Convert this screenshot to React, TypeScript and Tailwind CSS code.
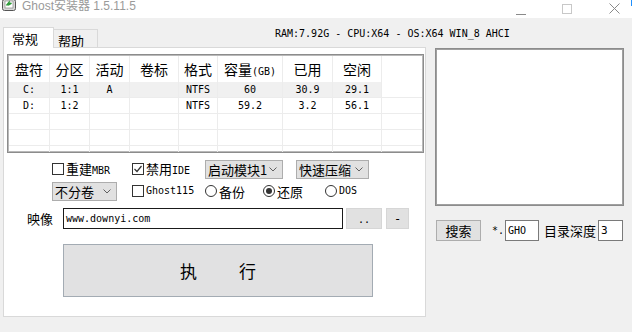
import React from "react";

const cjk = "font-['Noto_Sans_CJK_SC',sans-serif]";
const mono = "font-['DejaVu_Sans_Mono','Noto_Sans_CJK_SC',monospace]";

const columns = [
  { key: "drive", label: "盘符", w: "w-[41px]" },
  { key: "part", label: "分区", w: "w-[40px]" },
  { key: "active", label: "活动", w: "w-[40px]" },
  { key: "vol", label: "卷标", w: "w-[49px]" },
  { key: "fmt", label: "格式", w: "w-[39px]" },
  { key: "size", label: "容量", w: "w-[65px]", unit: "(GB)" },
  { key: "used", label: "已用", w: "w-[50px]" },
  { key: "free", label: "空闲", w: "w-[49px]" },
];

const rows = [
  ["C:", "1:1", "A", "", "NTFS", "60", "30.9", "29.1"],
  ["D:", "1:2", "", "", "NTFS", "59.2", "3.2", "56.1"],
  ["", "", "", "", "", "", "", ""],
  ["", "", "", "", "", "", "", ""],
  ["", "", "", "", "", "", "", ""],
];

const Chevron = () => (
  <svg width="8" height="5" viewBox="0 0 8 5" className="shrink-0">
    <polyline points="0.5,0.5 4,4 7.5,0.5" fill="none" stroke="#606060" strokeWidth="1" />
  </svg>
);

const CheckBox = ({ checked, children }: { checked?: boolean; children: React.ReactNode }) => (
  <div className="flex items-center gap-[2px]">
    <div className="w-[12px] h-[12px] border border-[#333333] bg-white flex items-center justify-center">
      {checked && (
        <svg width="10" height="10" viewBox="0 0 10 10">
          <polyline points="1.5,5 4,7.5 8.5,2" fill="none" stroke="#333333" strokeWidth="1.2" />
        </svg>
      )}
    </div>
    <span className="flex items-baseline">{children}</span>
  </div>
);

const Radio = ({ checked, children }: { checked?: boolean; children: React.ReactNode }) => (
  <div className="flex items-center gap-[2px]">
    <div className="w-[12px] h-[12px] rounded-full border border-[#333333] bg-white flex items-center justify-center">
      {checked && <div className="w-[6px] h-[6px] rounded-full bg-[#333333]" />}
    </div>
    <span className="flex items-baseline">{children}</span>
  </div>
);

const Select = ({ label, w }: { label: React.ReactNode; w: string }) => (
  <div className={`${w} h-[19px] bg-[#e1e1e1] border border-[#adadad] flex items-center justify-between pl-[2px] pr-[5px]`}>
    <span className={`${cjk} text-[13px] leading-none text-black`}>{label}</span>
    <Chevron />
  </div>
);

const App: React.FC = () => {
  return (
    <div className={`w-[632px] h-[332px] bg-[#f0f0f0] overflow-hidden text-black ${cjk}`}>
      {/* title bar */}
      <div className="h-[18px] bg-white flex items-start relative">
        <svg width="15" height="13" viewBox="0 0 15 13" className="ml-[2px] mt-[-1px]">
          <rect x="0.5" y="0.5" width="13" height="11" rx="2" fill="#d8d8d8" stroke="#555555" />
          <rect x="3" y="2" width="8" height="7" fill="#ffffff" stroke="#777777" strokeWidth="0.6" />
          <path d="M4.5 6.5 L7 3.5 L7 5.5 L9.5 4" fill="none" stroke="#2e9b3a" strokeWidth="1.6" />
        </svg>
        <span className="ml-[5px] mt-0 text-[12px] leading-[13px] text-[#9a9a9a] font-['Liberation_Sans','Noto_Sans_CJK_SC',sans-serif]">
          Ghost安装器 1.5.11.5
        </span>
        <div className="ml-auto flex items-start">
          <div className="w-[10px] h-px bg-[#8a8a8a] mt-[14px] mr-[36px]" />
          <div className="w-[10px] h-[10px] border border-[#c8c8c8] mt-[4px] mr-[37px]" />
          <svg width="11" height="11" viewBox="0 0 11 11" className="mt-[3px] mr-[12px]">
            <path d="M0.5 0.5 L10.5 10.5 M10.5 0.5 L0.5 10.5" stroke="#8a8a8a" strokeWidth="1" />
          </svg>
        </div>
        <div className="absolute right-0 top-0 w-px h-[6px] bg-[#1e90ff]" />
      </div>

      {/* tab strip */}
      <div className="h-[29px] flex items-end pl-[3px]">
        <div className="w-[51px] h-[21px] bg-white border border-b-0 border-[#d9d9d9] flex items-center pl-[8px] text-[13px] leading-none relative z-10 mb-[-1px]">
          常规
        </div>
        <div className="w-[44px] h-[18px] bg-[#f0f0f0] border border-b-0 border-l-0 border-[#d9d9d9] flex items-center pl-[4px] pt-[3px] text-[13px] leading-none">
          帮助
        </div>
        <div className={`self-start mt-[10px] ml-[177px] ${mono} text-[10px] leading-[12px] whitespace-nowrap`}>
          RAM:7.92G - CPU:X64 - OS:X64 WIN_8 AHCI
        </div>
      </div>

      <div className="flex pl-[3px]">
        {/* tab panel */}
        <div className="w-[423px] h-[270px] bg-white border border-[#d9d9d9] flex flex-col">
          {/* partition list */}
          <div className="ml-[3px] mt-[6px] w-[417px] h-[99px] border border-[#8c8c8c] shadow-[inset_1px_1px_0_#b9b9b9,inset_-1px_-1px_0_#b9b9b9] p-[1px] overflow-hidden">
            <div className="flex h-[26px]">
              {columns.map((c) => (
                <div key={c.key} className={`${c.w} h-full border-r border-[#ececec] flex items-baseline justify-center pt-[6px] text-[14px] leading-[14px]`}>
                  {c.label}
                  {c.unit && <span className={`${mono} text-[10px]`}>{c.unit}</span>}
                </div>
              ))}
              <div className="flex-1" />
            </div>
            {rows.map((r, i) => (
              <div key={i} className="flex h-[16px]">
                {columns.map((c, j) => (
                  <div
                    key={c.key}
                    className={`${c.w} h-full border-r border-b border-[#ececec] flex items-center justify-center ${mono} text-[10px] leading-none ${i === 0 ? "bg-[#f0f0f0]" : ""}`}
                  >
                    {r[j]}
                  </div>
                ))}
                <div className="flex-1 border-b border-[#ececec]" />
              </div>
            ))}
          </div>

          {/* option row 1 */}
          <div className="flex items-center mt-[6px] h-[20px] pl-[48px]">
            <div className="w-[80px]">
              <CheckBox>
                <span className="text-[13px] leading-none">重建</span>
                <span className={`${mono} text-[10px] leading-none`}>MBR</span>
              </CheckBox>
            </div>
            <div className="w-[73px]">
              <CheckBox checked>
                <span className="text-[13px] leading-none">禁用</span>
                <span className={`${mono} text-[10px] leading-none`}>IDE</span>
              </CheckBox>
            </div>
            <Select w="w-[78px]" label={<>启动模块1</>} />
            <div className="w-[13px]" />
            <Select w="w-[73px]" label={<>快速压缩</>} />
          </div>

          {/* option row 2 */}
          <div className="flex items-center mt-[2px] h-[20px] pl-[48px]">
            <Select w="w-[65px]" label={<>不分卷</>} />
            <div className="w-[15px]" />
            <div className="w-[73px]">
              <CheckBox>
                <span className={`${mono} text-[10px] leading-none`}>Ghost115</span>
              </CheckBox>
            </div>
            <div className="w-[58px]">
              <Radio>
                <span className="text-[13px] leading-none">备份</span>
              </Radio>
            </div>
            <div className="w-[62px]">
              <Radio checked>
                <span className="text-[13px] leading-none">还原</span>
              </Radio>
            </div>
            <Radio>
              <span className={`${mono} text-[10px] leading-none`}>DOS</span>
            </Radio>
          </div>

          {/* image path */}
          <div className="flex items-center mt-[7px] h-[21px] pl-[23px]">
            <span className="w-[36px] text-[13px] leading-none">映像</span>
            <div className={`w-[280px] h-[21px] border border-[#1a1a1a] bg-white flex items-center pl-[2px] ${mono} text-[10px] leading-none`}>
              www.downyi.com
            </div>
            <button className={`ml-[3px] w-[36px] h-[21px] bg-[#e1e1e1] border border-[#d6d6d6] ${mono} text-[10px] leading-none pt-[3px]`}>
              ..
            </button>
            <button className={`ml-[4px] w-[23px] h-[21px] bg-[#e1e1e1] border border-[#d6d6d6] ${mono} text-[12px] leading-none`}>
              -
            </button>
          </div>

          {/* run */}
          <button className="ml-[59px] mt-[15px] w-[310px] h-[53px] bg-[#e1e1e2] border border-[#a3abb3] flex items-center justify-center gap-[42px] text-[17px] leading-none">
            <span>执</span>
            <span>行</span>
          </button>
        </div>

        {/* right side */}
        <div className="ml-[9px] flex flex-col">
          <div className="mt-px w-[189px] h-[158px] bg-white border border-[#8c8c8c] shadow-[inset_1px_1px_0_#a0a0a0,inset_-1px_-1px_0_#a0a0a0]" />
          <div className="flex items-center mt-[14px] h-[21px]">
            <button className="ml-px w-[45px] h-[21px] bg-[#e1e1e1] border border-[#adadad] text-[13px] leading-none">
              搜索
            </button>
            <span className={`ml-[11px] w-[13px] ${mono} text-[10px] leading-none`}>*.</span>
            <div className={`w-[34px] h-[21px] bg-white border border-[#7a7a7a] flex items-center pl-[2px] ${mono} text-[10px] leading-none`}>
              GHO
            </div>
            <span className="ml-[5px] w-[54px] text-[13px] leading-none">目录深度</span>
            <div className={`w-[25px] h-[21px] bg-white border border-[#7a7a7a] flex items-center pl-[2px] ${mono} text-[11px] leading-none`}>
              3
            </div>
          </div>
        </div>
      </div>
    </div>
  );
};

export default App;
